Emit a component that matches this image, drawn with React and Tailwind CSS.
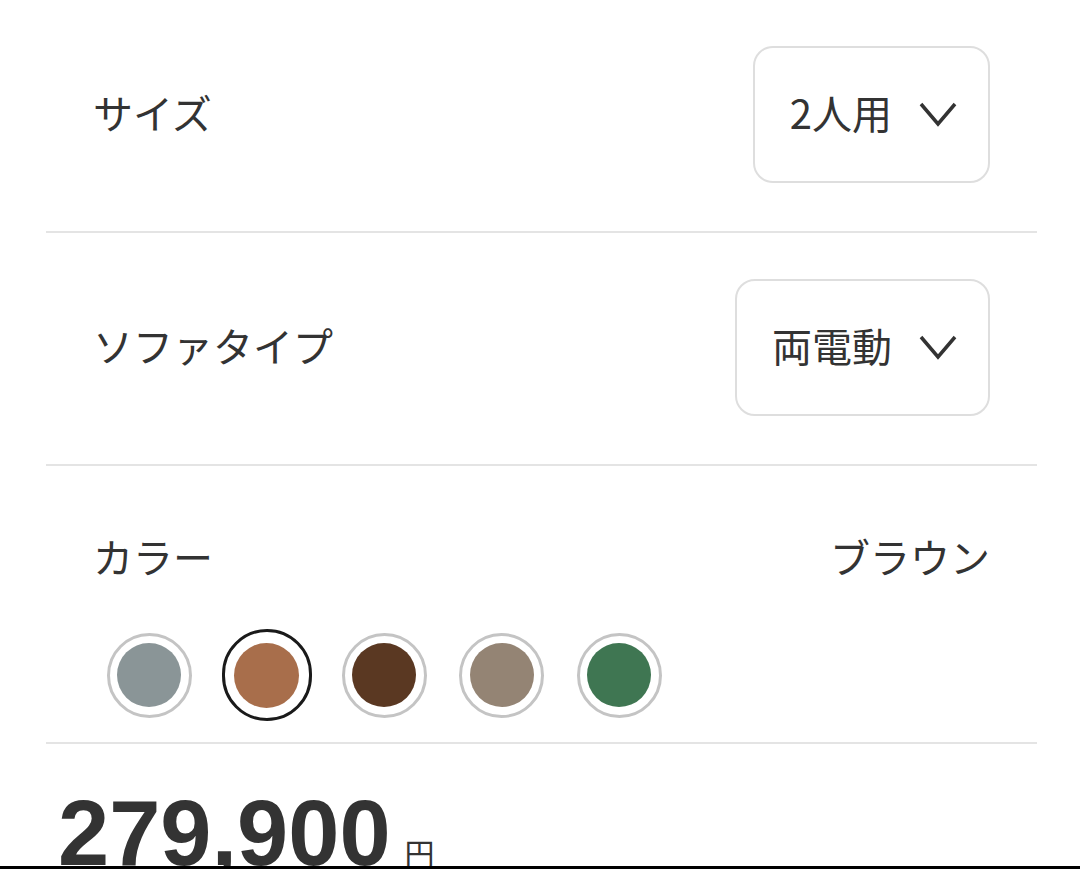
import React from "react";

const jp = { fontFamily: '"Noto Sans CJK JP", "Noto Sans", sans-serif' };

function Chevron() {
  return (
    <svg width="38" height="25" viewBox="0 0 38 25" fill="none" className="shrink-0">
      <polyline points="2,2 19,22 36,2" stroke="#333" strokeWidth="3.5" strokeLinejoin="miter" fill="none" />
    </svg>
  );
}

function SelectBox({ value }) {
  return (
    <div className="flex h-[137px] items-center rounded-[20px] border-2 border-[#dedede] pl-[35px] pr-[31px] gap-[27px]">
      <span className="pb-[6px] text-[40px] leading-none text-[#333]">{value}</span>
      <Chevron />
    </div>
  );
}

function Row({ label, value }) {
  return (
    <div className="flex items-center justify-between pl-[47px] pr-[47px] pt-[46px] pb-[48px]">
      <span className="pb-[6px] text-[40px] leading-none text-[#333]">{label}</span>
      <SelectBox value={value} />
    </div>
  );
}

const swatches = [
  { c: "bg-[#8a9597]", sel: false },
  { c: "bg-[#a86e4b]", sel: true },
  { c: "bg-[#5a3822]", sel: false },
  { c: "bg-[#948474]", sel: false },
  { c: "bg-[#3f7652]", sel: false },
];

export default function App() {
  return (
    <div className="relative h-[869px] w-[1080px] overflow-hidden bg-white" style={jp}>
      <div className="pl-[46px] pr-[43px]">
        <Row label="サイズ" value="2人用" />
        <div className="h-[2px] bg-[#e4e4e4]" />
        <Row label="ソファタイプ" value="両電動" />
        <div className="h-[2px] bg-[#e4e4e4]" />
        <div className="pl-[47px] pr-[47px] pt-[66px] pb-[22px]">
          <div className="flex items-center justify-between">
            <span className="text-[40px] leading-[48px] text-[#333]">カラー</span>
            <span className="text-[40px] leading-[48px] text-[#333]">ブラウン</span>
          </div>
          <div className="mt-[50px] flex gap-[27.5px] pl-[11px]">
            {swatches.map((s, i) => (
              <div key={i} className="flex h-[90px] w-[90px] items-center justify-center">
                {s.sel ? (
                  <div className="flex h-[92px] w-[92px] items-center justify-center rounded-full border-[3px] border-[#1a1a1a] bg-white">
                    <div className={`h-[65px] w-[65px] rounded-full ${s.c}`} />
                  </div>
                ) : (
                  <div className="flex h-[85px] w-[85px] items-center justify-center rounded-full border-[3px] border-[#c4c4c4] bg-white">
                    <div className={`h-[64px] w-[64px] rounded-full ${s.c}`} />
                  </div>
                )}
              </div>
            ))}
          </div>
        </div>
        <div className="h-[2px] bg-[#e4e4e4]" />
        <div className="flex items-baseline pl-[12px] pt-[43px]">
          <span
            className="text-[92px] font-bold leading-none text-[#333]"
            style={{ fontFamily: '"Liberation Sans", Arial, sans-serif' }}
          >
            279,900
          </span>
          <span className="ml-[14px] text-[30px] leading-none text-[#333]">円</span>
        </div>
      </div>
      <div className="absolute bottom-0 left-0 right-0 h-[3px] bg-black" />
    </div>
  );
}
